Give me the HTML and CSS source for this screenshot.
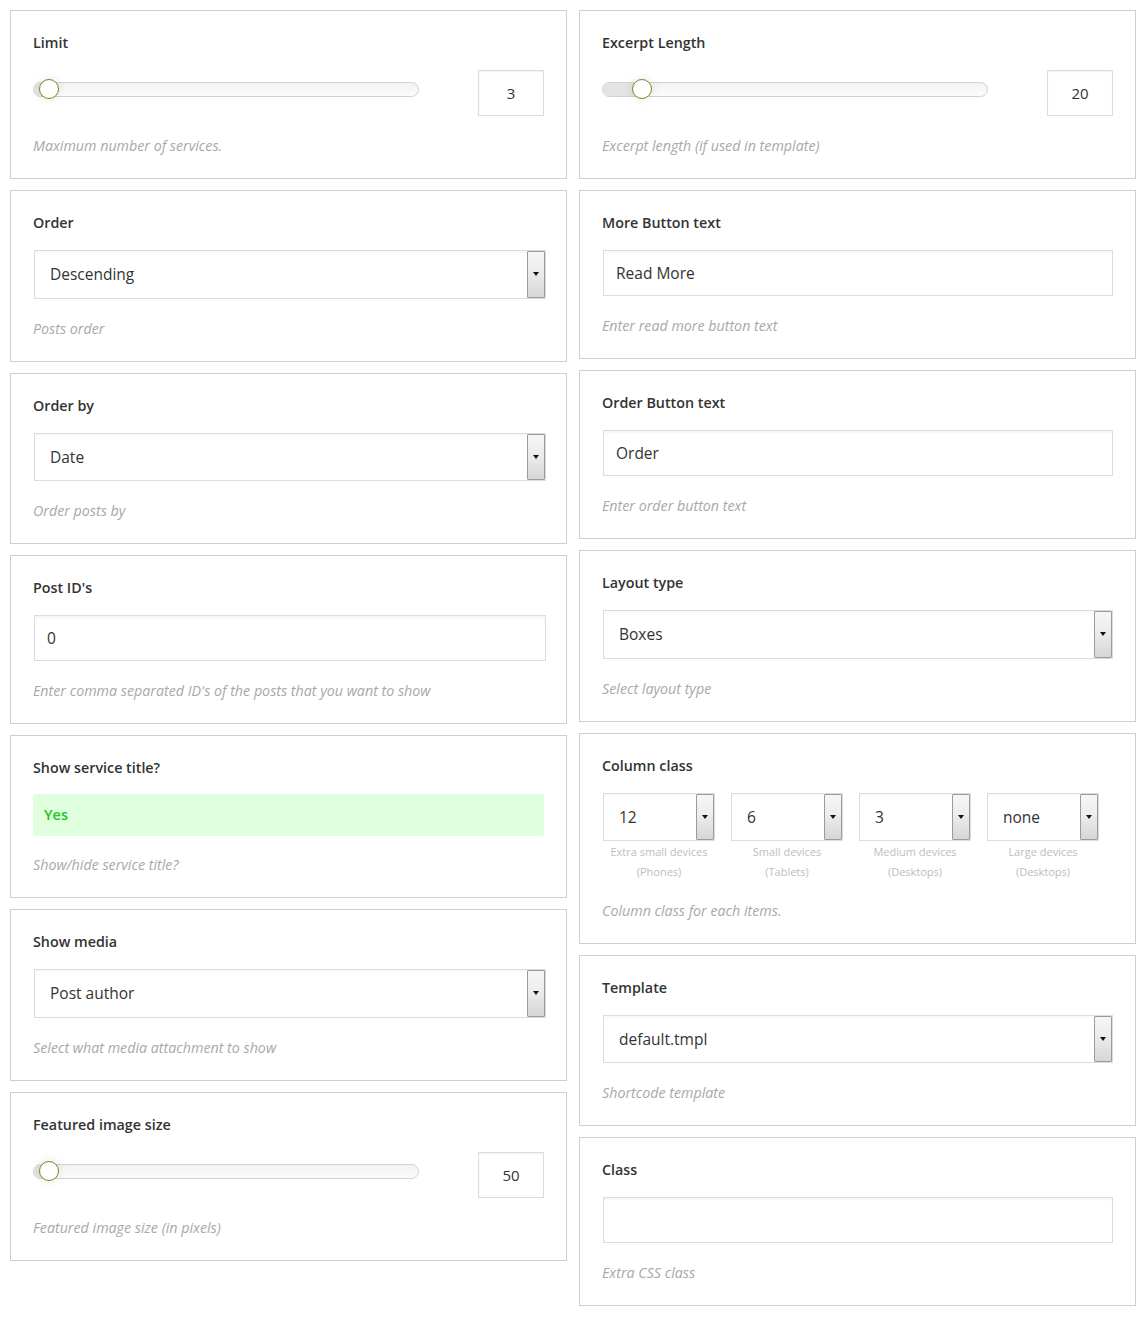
FILE: index.html
```html
<!DOCTYPE html>
<html>
<head>
<meta charset="utf-8">
<link rel="stylesheet" href="styles.css">
</head>
<body>
<div class="page">
  <div class="col">
    <div class="box">
      <div class="label">Limit</div>
      <div class="slider-row">
        <div class="track"><div class="fill" style="width:15px"></div><div class="thumb" style="left:5px"></div></div>
        <div class="num">3</div>
      </div>
      <div class="desc">Maximum number of services.</div>
    </div>
    <div class="box">
      <div class="label">Order</div>
      <div class="select"><span class="val">Descending</span><span class="btn"><i></i></span></div>
      <div class="desc">Posts order</div>
    </div>
    <div class="box">
      <div class="label">Order by</div>
      <div class="select"><span class="val">Date</span><span class="btn"><i></i></span></div>
      <div class="desc">Order posts by</div>
    </div>
    <div class="box">
      <div class="label">Post ID's</div>
      <div class="input">0</div>
      <div class="desc">Enter comma separated ID's of the posts that you want to show</div>
    </div>
    <div class="box">
      <div class="label">Show service title?</div>
      <div class="yes">Yes</div>
      <div class="desc desc-yes">Show/hide service title?</div>
    </div>
    <div class="box">
      <div class="label">Show media</div>
      <div class="select"><span class="val">Post author</span><span class="btn"><i></i></span></div>
      <div class="desc">Select what media attachment to show</div>
    </div>
    <div class="box">
      <div class="label">Featured image size</div>
      <div class="slider-row">
        <div class="track"><div class="fill" style="width:15px"></div><div class="thumb" style="left:5px"></div></div>
        <div class="num">50</div>
      </div>
      <div class="desc">Featured image size (in pixels)</div>
    </div>
  </div>
  <div class="col col-right">
    <div class="box">
      <div class="label">Excerpt Length</div>
      <div class="slider-row">
        <div class="track"><div class="fill" style="width:39px"></div><div class="thumb" style="left:29px"></div></div>
        <div class="num">20</div>
      </div>
      <div class="desc">Excerpt length (if used in template)</div>
    </div>
    <div class="box">
      <div class="label">More Button text</div>
      <div class="input">Read More</div>
      <div class="desc">Enter read more button text</div>
    </div>
    <div class="box">
      <div class="label">Order Button text</div>
      <div class="input">Order</div>
      <div class="desc">Enter order button text</div>
    </div>
    <div class="box">
      <div class="label">Layout type</div>
      <div class="select"><span class="val">Boxes</span><span class="btn"><i></i></span></div>
      <div class="desc">Select layout type</div>
    </div>
    <div class="box">
      <div class="label">Column class</div>
      <div class="cols">
        <div class="cc">
          <div class="select small"><span class="val">12</span><span class="btn"><i></i></span></div>
          <div class="cap">Extra small devices<br>(Phones)</div>
        </div>
        <div class="cc">
          <div class="select small"><span class="val">6</span><span class="btn"><i></i></span></div>
          <div class="cap">Small devices<br>(Tablets)</div>
        </div>
        <div class="cc">
          <div class="select small"><span class="val">3</span><span class="btn"><i></i></span></div>
          <div class="cap">Medium devices<br>(Desktops)</div>
        </div>
        <div class="cc">
          <div class="select small"><span class="val">none</span><span class="btn"><i></i></span></div>
          <div class="cap">Large devices<br>(Desktops)</div>
        </div>
      </div>
      <div class="desc">Column class for each items.</div>
    </div>
    <div class="box">
      <div class="label">Template</div>
      <div class="select"><span class="val">default.tmpl</span><span class="btn"><i></i></span></div>
      <div class="desc">Shortcode template</div>
    </div>
    <div class="box">
      <div class="label">Class</div>
      <div class="input"></div>
      <div class="desc">Extra CSS class</div>
    </div>
  </div>
</div>
</body>
</html>
```
FILE: styles.css
```css
* { box-sizing: border-box; }
html, body { margin: 0; padding: 0; background: #fff; }
body {
  font-family: "Open Sans", "Noto Sans", "Liberation Sans", sans-serif;
  color: #333;
}
.page {
  display: grid;
  grid-template-columns: 557px 557px;
  column-gap: 12px;
  padding: 10px;
  align-items: start;
}
.col {
  display: flex;
  flex-direction: column;
  gap: 11px;
}
.box {
  border: 1px solid #cfcfcf;
  padding: 22px 22px 22px 22px;
  background: #fff;
}
.label {
  font-size: 14.3px;
  font-weight: 600;
  line-height: 20px;
  color: #333;
  margin-bottom: 17px;
}
.desc {
  font-size: 14.25px;
  font-style: italic;
  line-height: 20px;
  color: #a8a8a8;
  margin-top: 20px;
}
.desc-yes { margin-top: 19px; }

/* slider */
.slider-row {
  display: flex;
  justify-content: space-between;
  align-items: flex-start;
  height: 46px;
}
.track {
  position: relative;
  width: 386px;
  height: 15px;
  margin-top: 12px;
  border: 1px solid #d2d2d2;
  border-radius: 8px;
  background: linear-gradient(#f3f3f3, #fbfbfb);
}
.fill {
  height: 13px;
  border-radius: 7px 0 0 7px;
  background: #e4e4e4;
}
.thumb {
  position: absolute;
  top: -4px;
  width: 20px;
  height: 20px;
  border-radius: 50%;
  background: #fff;
  border: 1.5px solid #6e8c1d;
  box-shadow: 0 0 6px 3px rgba(0,0,0,0.05);
}
.num {
  width: 66px;
  height: 46px;
  border: 1px solid #dcdcdc;
  box-shadow: inset 0 1px 2px rgba(0,0,0,0.06);
  font-size: 15px;
  line-height: 44px;
  text-align: center;
  color: #333;
}

/* text input */
.input {
  height: 46px;
  margin-left: 1px;
  border: 1px solid #dcdcdc;
  box-shadow: inset 0 2px 2px rgba(0,0,0,0.04);
  padding: 0 12px;
  font-size: 15.5px;
  line-height: 44px;
  color: #333;
}
.col:first-child .input { margin-right: -2px; }

/* select */
.select {
  display: flex;
  align-items: stretch;
  height: 48.5px;
  margin-left: 1px;
  border: 1px solid #dcdcdc;
  box-shadow: inset 0 2px 2px rgba(0,0,0,0.03);
  background: #fff;
}
.col:first-child .select { margin-right: -2px; }
.select .val {
  flex: 1;
  padding-left: 15px;
  font-size: 15.5px;
  line-height: 46px;
  color: #333;
}
.select .btn {
  width: 18px;
  border: 1px solid #9b9b9b;
  border-radius: 1px;
  background: linear-gradient(#f6f6f6 0%, #ececec 45%, #d6d6d6 100%);
  display: flex;
  align-items: center;
  justify-content: center;
}
.select .btn i {
  display: block;
  width: 0;
  height: 0;
  border-left: 3.5px solid transparent;
  border-right: 3.5px solid transparent;
  border-top: 4px solid #111;
}

/* yes toggle */
.yes {
  height: 42px;
  margin-top: -1px;
  border-radius: 3px;
  background: #dfffdf;
  color: #1fc41f;
  font-size: 14.5px;
  font-weight: 600;
  line-height: 42px;
  padding-left: 11px;
}

/* column class */
.cols {
  display: grid;
  grid-template-columns: repeat(4, 128px);
  margin-left: 1px;
}
.cc { width: 112px; }
.select.small { margin: 0; height: 48px; }
.cap {
  font-size: 11px;
  line-height: 20px;
  color: #bdbdbd;
  text-align: center;
  margin-top: 1px;
}
.cols + .desc { margin-top: 19px; }
```
